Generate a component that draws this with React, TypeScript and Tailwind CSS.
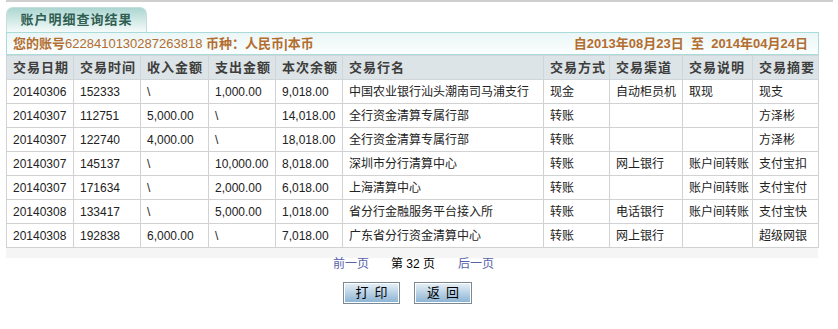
import React from 'react';

const rows = [
  ['20140306', '152333', '\\', '1,000.00', '9,018.00', '中国农业银行汕头潮南司马浦支行', '现金', '自动柜员机', '取现', '现支'],
  ['20140307', '112751', '5,000.00', '\\', '14,018.00', '全行资金清算专属行部', '转账', '', '', '方泽彬'],
  ['20140307', '122740', '4,000.00', '\\', '18,018.00', '全行资金清算专属行部', '转账', '', '', '方泽彬'],
  ['20140307', '145137', '\\', '10,000.00', '8,018.00', '深圳市分行清算中心', '转账', '网上银行', '账户间转账', '支付宝扣'],
  ['20140307', '171634', '\\', '2,000.00', '6,018.00', '上海清算中心', '转账', '', '账户间转账', '支付宝付'],
  ['20140308', '133417', '\\', '5,000.00', '1,018.00', '省分行金融服务平台接入所', '转账', '电话银行', '账户间转账', '支付宝快'],
  ['20140308', '192838', '6,000.00', '\\', '7,018.00', '广东省分行资金清算中心', '转账', '网上银行', '', '超级网银'],
];

const headers = ['交易日期', '交易时间', '收入金额', '支出金额', '本次余额', '交易行名', '交易方式', '交易渠道', '交易说明', '交易摘要'];
const widths = [67, 67, 68, 67, 67, 201, 66, 73, 70, 66];

export default function App() {
  return (
    <div className="w-[838px] h-[329px] bg-white font-['Liberation_Sans','Noto_Sans_CJK_SC',sans-serif] text-[12px] text-[#222]">
      <div className="ml-[6px] w-[827px] h-[2px] bg-[#cfcfcf]" />

      <div className="ml-[6px] mt-[5px] w-[813px]">
        {/* tab */}
        <div className="w-[141px] h-[25px] rounded-t-[7px] border border-b-0 border-[#c4dedb] bg-gradient-to-b from-[#acd6d1] to-[#f5fbfa] flex items-center justify-center">
          <span className="text-[13px] font-bold tracking-[1px] text-[#2f5e52]">账户明细查询结果</span>
        </div>

        {/* info bar */}
        <div className="h-[23px] border border-[#a9dcd9] bg-gradient-to-b from-[#ebf6f6] to-[#fbfefe] flex items-center justify-between px-[6px] text-[13px] font-bold text-[#b36d2f]">
          <span>
            您的账号<span className="font-normal">6228410130287263818</span> 币种：人民币|本币
          </span>
          <span className="pr-[4px]">自2013年08月23日&nbsp;&nbsp;至&nbsp;&nbsp;2014年04月24日</span>
        </div>

        {/* table */}
        <table className="table-fixed border-collapse w-[812px]">
          <colgroup>
            {widths.map((w, i) => (
              <col key={i} style={{ width: w }} />
            ))}
          </colgroup>
          <thead>
            <tr className="h-[24px] bg-[#dde4e7]">
              {headers.map((h) => (
                <th key={h} className="border border-[#cfd5d8] pl-[6px] text-left text-[13px] font-bold tracking-[1px] text-[#3d3d3d] whitespace-nowrap">
                  {h}
                </th>
              ))}
            </tr>
          </thead>
          <tbody>
            {rows.map((r, i) => (
              <tr key={i} className="h-[24px] bg-white">
                {r.map((c, j) => (
                  <td key={j} className="border border-[#d2d2d2] pl-[6px] whitespace-nowrap overflow-hidden">
                    {c}
                  </td>
                ))}
              </tr>
            ))}
          </tbody>
        </table>
        <div className="h-[10px] w-[812px] bg-[#f5f5f5]" />
      </div>

      {/* pager */}
      <div className="flex items-center h-[14px] mt-[-1px] text-[12px]">
        <span className="ml-[333px] text-[#5661aa]">前一页</span>
        <span className="ml-[22px] text-black">第 32 页</span>
        <span className="ml-[23px] text-[#5661aa]">后一页</span>
      </div>

      {/* buttons */}
      <div className="flex mt-[11px] ml-[343px] gap-[14px]">
        <button className="w-[57px] h-[22px] border border-[#7a8894] p-[1px] bg-white">
          <div className="h-full bg-gradient-to-b from-[#e3eef6] to-[#8eb5d4] flex items-center justify-center text-[13px] text-black tracking-[6px] pl-[6px]">
            打印
          </div>
        </button>
        <button className="w-[58px] h-[22px] border border-[#7a8894] p-[1px] bg-white">
          <div className="h-full bg-gradient-to-b from-[#e3eef6] to-[#8eb5d4] flex items-center justify-center text-[13px] text-black tracking-[6px] pl-[6px]">
            返回
          </div>
        </button>
      </div>
    </div>
  );
}
